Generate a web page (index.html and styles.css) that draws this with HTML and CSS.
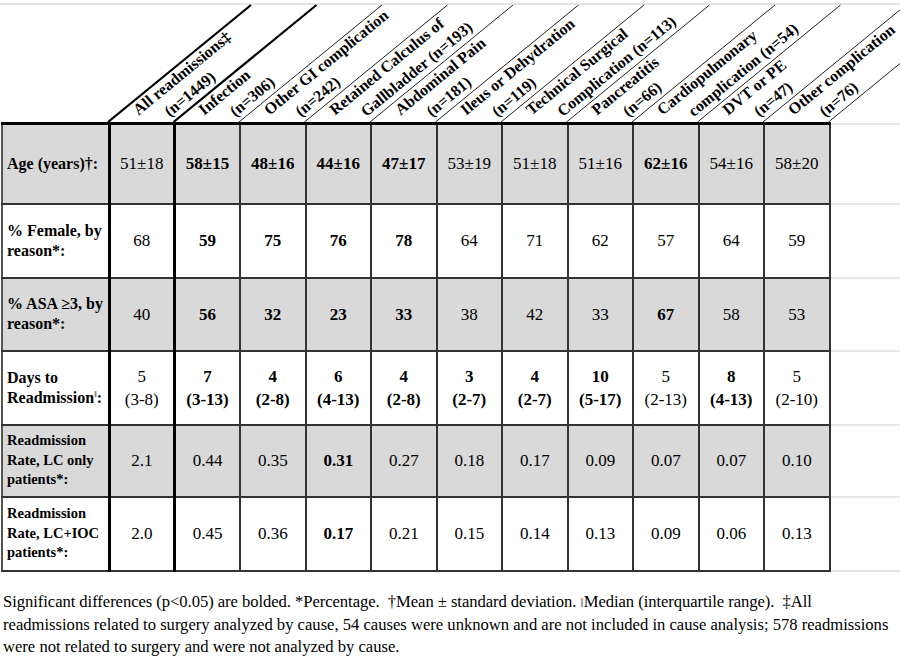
FILE: index.html
```html
<!DOCTYPE html>
<html>
<head>
<meta charset="utf-8">
<link rel="stylesheet" href="styles.css">
</head>
<body>
<div class="page">
  <svg class="head" width="900" height="122" viewBox="0 0 900 122">
    <line class="topline" x1="0" y1="4" x2="900" y2="4"/>
    <line class="dthick" x1="108" y1="122" x2="251" y2="5"/>
    <line class="dthick" x1="173.5" y1="122" x2="316.5" y2="5"/>
    <line class="dthin" x1="239" y1="122" x2="382" y2="5"/>
    <line class="dthin" x1="304.5" y1="122" x2="447.5" y2="5"/>
    <line class="dthin" x1="370" y1="122" x2="513" y2="5"/>
    <line class="dthin" x1="435.5" y1="122" x2="578.5" y2="5"/>
    <line class="dthin" x1="501" y1="122" x2="644" y2="5"/>
    <line class="dthin" x1="566.5" y1="122" x2="709.5" y2="5"/>
    <line class="dthin" x1="632" y1="122" x2="775" y2="5"/>
    <line class="dthin" x1="697.5" y1="122" x2="840.5" y2="5"/>
    <line class="dthin" x1="763" y1="122" x2="906" y2="5"/>
    <line class="dthin" x1="828.5" y1="122" x2="971.5" y2="5"/>
    <g class="hl" transform="translate(173.5 122) rotate(-39.4)"><text x="-23" y="-27">All readmissions‡</text><text x="0" y="-6">(n=1449)</text></g>
    <g class="hl" transform="translate(239 122) rotate(-39.4)"><text x="-23" y="-27">Infection</text><text x="0" y="-6">(n=306)</text></g>
    <g class="hl" transform="translate(304.5 122) rotate(-39.4)"><text x="-23" y="-27">Other GI complication</text><text x="0" y="-6">(n=242)</text></g>
    <g class="hl" transform="translate(370 122) rotate(-39.4)"><text x="-23" y="-27">Retained Calculus of</text><text x="0" y="-6">Gallbladder (n=193)</text></g>
    <g class="hl" transform="translate(435.5 122) rotate(-39.4)"><text x="-23" y="-27">Abdominal Pain</text><text x="0" y="-6">(n=181)</text></g>
    <g class="hl" transform="translate(501 122) rotate(-39.4)"><text x="-23" y="-27">Ileus or Dehydration</text><text x="0" y="-6">(n=119)</text></g>
    <g class="hl" transform="translate(566.5 122) rotate(-39.4)"><text x="-23" y="-27">Technical Surgical</text><text x="0" y="-6">Complication (n=113)</text></g>
    <g class="hl" transform="translate(632 122) rotate(-39.4)"><text x="-23" y="-27">Pancreatitis</text><text x="0" y="-6">(n=66)</text></g>
    <g class="hl" transform="translate(697.5 122) rotate(-39.4)"><text x="-23" y="-27">Cardiopulmonary</text><text x="0" y="-6">complication (n=54)</text></g>
    <g class="hl" transform="translate(763 122) rotate(-39.4)"><text x="-23" y="-27">DVT or PE</text><text x="0" y="-6">(n=47)</text></g>
    <g class="hl" transform="translate(828.5 122) rotate(-39.4)"><text x="-23" y="-27">Other complication</text><text x="0" y="-6">(n=76)</text></g>
  </svg>
  <table class="grid">
    <colgroup>
      <col class="c-lab"><col class="c-d"><col class="c-d"><col class="c-d"><col class="c-d"><col class="c-d"><col class="c-d"><col class="c-d"><col class="c-d"><col class="c-d"><col class="c-d"><col class="c-d"><col class="c-fill">
    </colgroup>
    <tr class="gray r1">
      <td class="lab">Age (years)†:</td>
      <td class="all">51±18</td><td><b>58±15</b></td><td><b>48±16</b></td><td><b>44±16</b></td><td><b>47±17</b></td><td>53±19</td><td>51±18</td><td>51±16</td><td><b>62±16</b></td><td>54±16</td><td>58±20</td>
      <td class="fill"></td>
    </tr>
    <tr class="r2">
      <td class="lab">% Female, by reason*:</td>
      <td class="all">68</td><td><b>59</b></td><td><b>75</b></td><td><b>76</b></td><td><b>78</b></td><td>64</td><td>71</td><td>62</td><td>57</td><td>64</td><td>59</td>
      <td class="fill"></td>
    </tr>
    <tr class="gray r3">
      <td class="lab">% ASA ≥3, by reason*:</td>
      <td class="all">40</td><td><b>56</b></td><td><b>32</b></td><td><b>23</b></td><td><b>33</b></td><td>38</td><td>42</td><td>33</td><td><b>67</b></td><td>58</td><td>53</td>
      <td class="fill"></td>
    </tr>
    <tr class="r4">
      <td class="lab">Days to Readmission<sup class="med">ǁ</sup>:</td>
      <td class="all">5<br>(3-8)</td><td><b>7<br>(3-13)</b></td><td><b>4<br>(2-8)</b></td><td><b>6<br>(4-13)</b></td><td><b>4<br>(2-8)</b></td><td><b>3<br>(2-7)</b></td><td><b>4<br>(2-7)</b></td><td><b>10<br>(5-17)</b></td><td>5<br>(2-13)</td><td><b>8<br>(4-13)</b></td><td>5<br>(2-10)</td>
      <td class="fill"></td>
    </tr>
    <tr class="gray r5">
      <td class="lab sm">Readmission Rate, LC only patients*:</td>
      <td class="all">2.1</td><td>0.44</td><td>0.35</td><td><b>0.31</b></td><td>0.27</td><td>0.18</td><td>0.17</td><td>0.09</td><td>0.07</td><td>0.07</td><td>0.10</td>
      <td class="fill"></td>
    </tr>
    <tr class="r6">
      <td class="lab sm">Readmission Rate, LC+IOC patients*:</td>
      <td class="all">2.0</td><td>0.45</td><td>0.36</td><td><b>0.17</b></td><td>0.21</td><td>0.15</td><td>0.14</td><td>0.13</td><td>0.09</td><td>0.06</td><td>0.13</td>
      <td class="fill"></td>
    </tr>
  </table>
  <p class="note"><span class="tight">Significant differences (p&lt;0.05) are bolded. *Percentage.&nbsp; †Mean ± standard deviation. <span class="bar">ǁ</span>Median (interquartile range).&nbsp; ‡All</span><br>readmissions related to surgery analyzed by cause, 54 causes were unknown and are not included in cause analysis; 578 readmissions<br>were not related to surgery and were not analyzed by cause.</p>
</div>
</body>
</html>
```

FILE: styles.css
```css
* { box-sizing: border-box; }
body {
  margin: 0;
  background: #fff;
  color: #000;
  font-family: "Liberation Serif", "Times New Roman", serif;
}
.page {
  width: 900px;
  height: 657px;
  overflow: hidden;
}
.head {
  display: block;
}
.topline {
  stroke: #e4e4e4;
  stroke-width: 2;
}
.dthick {
  stroke: #000;
  stroke-width: 2.2;
}
.dthin {
  stroke: #222;
  stroke-width: 1;
}
.hl {
  font-family: "Liberation Serif", "Times New Roman", serif;
  font-weight: bold;
  font-size: 16px;
  fill: #000;
}
.grid {
  border-collapse: collapse;
  table-layout: fixed;
  width: 899px;
  margin-left: 1px;
}
.c-lab { width: 107px; }
.c-d { width: 65.5px; }
.c-fill { width: 71.5px; }
.grid td {
  border: 2px solid #333;
  padding: 0 2px;
  text-align: center;
  vertical-align: middle;
  font-size: 17px;
  line-height: 23px;
}
.grid tr:first-child td {
  border-top: 3px solid #000;
}
.grid td.all {
  border-left: 3px solid #000;
  border-right: 3px solid #000;
}
.grid td.lab {
  text-align: left;
  font-weight: bold;
  font-size: 16px;
  line-height: 20px;
  padding-left: 4px;
  border-left: 2px solid #555;
}
.grid td.lab.sm {
  font-size: 14.5px;
  line-height: 19.5px;
}
.gray td {
  background: #d9d9d9;
}
.grid td.fill,
.grid tr:first-child td.fill {
  background: #fff;
  border-left: none;
  border-right: none;
  border-top: 2px solid #e6e6e6;
  border-bottom: 2px solid #e6e6e6;
}
.r1 { height: 80px; }
.r2 { height: 74px; }
.r3 { height: 73px; }
.r4 { height: 74px; }
.r5 { height: 72px; }
.r6 { height: 74px; }
.med {
  font-size: 9px;
  font-weight: normal;
  vertical-align: 6px;
  line-height: 0;
}
.note {
  margin: 19px 0 0 3px;
  white-space: nowrap;
  font-size: 16.6px;
  line-height: 22px;
}
.tight {
  letter-spacing: -0.05px;
}
.bar {
  font-size: 12px;
  color: #666;
}
```
